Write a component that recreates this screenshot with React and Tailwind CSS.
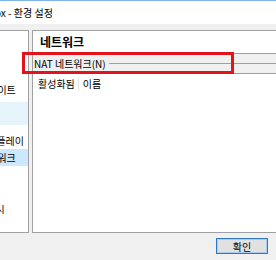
export default function App() {
  const font = "font-['Noto_Sans_CJK_KR','Noto_Sans',sans-serif]"

  return (
    <div className={`relative w-[276px] h-[260px] overflow-hidden bg-[#f0f0f0] text-black ${font} flex flex-col`}>
      {/* Title bar */}
      <div className="h-[24px] bg-white border-t border-[#7fb3e6] flex items-center text-[10px] whitespace-nowrap overflow-hidden">
        <span className="-ml-[5px]">ox - 환경 설정</span>
      </div>

      <div className="flex mt-[6px] h-[203px]">
        {/* Category list */}
        <div className="w-[29px] bg-white border-y border-r border-[#a0a0a0] overflow-hidden text-[10px] whitespace-nowrap">
          <div className="h-[50px]" />
          <div className="h-[17px] flex items-center -ml-[21px]">업데이트</div>
          <div className="h-[4px]" />
          <div className="h-[23px] bg-[#e5f3fb]" />
          <div className="h-[7px]" />
          <div className="h-[17px] flex items-center -ml-[22px]">디스플레이</div>
          <div className="h-[17px] flex items-center bg-[#cce8ff]">
            <span className="-ml-[21px]">네트워크</span>
          </div>
          <div className="h-[17px]" />
          <div className="h-[17px]" />
          <div className="h-[17px] flex items-center -ml-[23px]">프록시</div>
        </div>

        <div className="w-[3px]" />

        {/* Page */}
        <div className="flex-1 bg-white border-y border-l border-[#a0a0a0] flex flex-col">
          <div className="h-[22px] flex items-center pl-[7px] text-[12px] font-bold">네트워크</div>
          <div className="h-[21px] bg-[#f0f0f0] border-y border-[#a0a0a0] flex items-center text-[10px] whitespace-nowrap">
            <span className="pl-[1px]">NAT 네트워크(N)</span>
            <div className="flex-1 h-px bg-[#a0a0a0] ml-[3px]" />
          </div>
          <div className="h-[19px] flex items-center text-[10px] whitespace-nowrap">
            <span className="pl-[5px] pr-[3px]">활성화됨</span>
            <div className="w-px h-[13px] bg-[#e5e5e5]" />
            <span className="pl-[4px]">이름</span>
          </div>
        </div>
      </div>

      {/* Buttons */}
      <div className="flex-1 flex justify-end items-start pt-[5px] pr-[8px]">
        <button className="w-[52px] h-[16px] bg-[#e1e1e1] border border-[#2f78c4] shadow-[inset_0_0_0_1px_#a8cdee] text-[10px] flex items-center justify-center">
          확인
        </button>
      </div>

      {/* Annotation */}
      <div className="absolute left-[22px] top-[52px] w-[212px] h-[22px] border-[3px] border-[#e3131b]" />
    </div>
  )
}
